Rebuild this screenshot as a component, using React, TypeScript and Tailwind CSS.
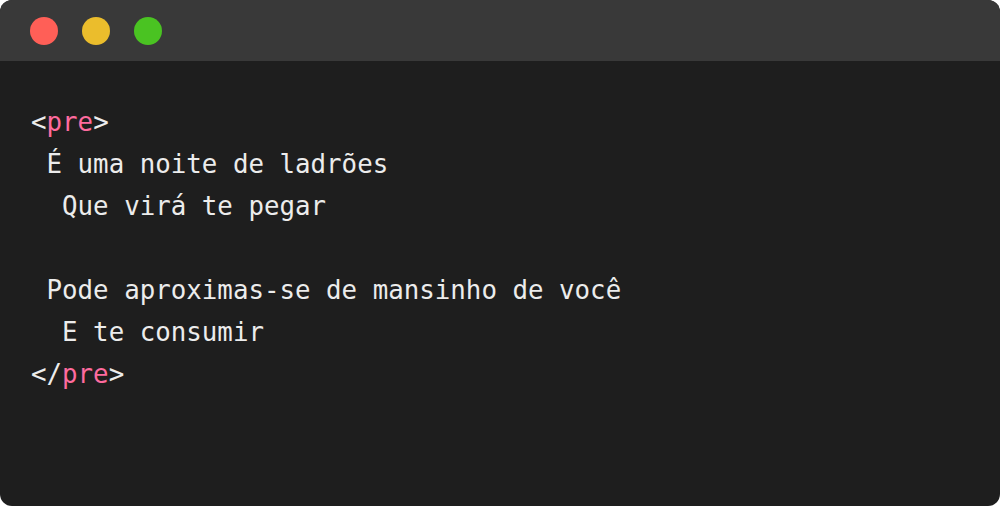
import React from 'react';

const Tag: React.FC<{ close?: boolean }> = ({ close }) => (
  <span>
    {close ? '</' : '<'}
    <span className="text-[#ff6b9e]">pre</span>
    {'>'}
  </span>
);

const lines = [
  ' É uma noite de ladrões',
  '  Que virá te pegar',
  '',
  ' Pode aproximas-se de mansinho de você',
  '  E te consumir',
];

export default function App() {
  return (
    <div className="w-[1000px] h-[506px] bg-white">
      <div className="w-full h-full rounded-xl overflow-hidden bg-[#1e1e1e] flex flex-col">
        <div className="h-[61px] bg-[#393939] flex items-center gap-6 pl-[30px]">
          <span className="w-7 h-7 rounded-full bg-[#ff5f57]" />
          <span className="w-7 h-7 rounded-full bg-[#ebbd2c]" />
          <span className="w-7 h-7 rounded-full bg-[#4ac322]" />
        </div>
        <pre className="pt-[40px] pl-[31px] text-[25.8px] leading-[42px] text-[#ececec] font-['DejaVu_Sans_Mono',monospace] whitespace-pre">
          <Tag />
          {'\n'}
          {lines.map((l, i) => (
            <React.Fragment key={i}>
              {l}
              {'\n'}
            </React.Fragment>
          ))}
          <Tag close />
        </pre>
      </div>
    </div>
  );
}
